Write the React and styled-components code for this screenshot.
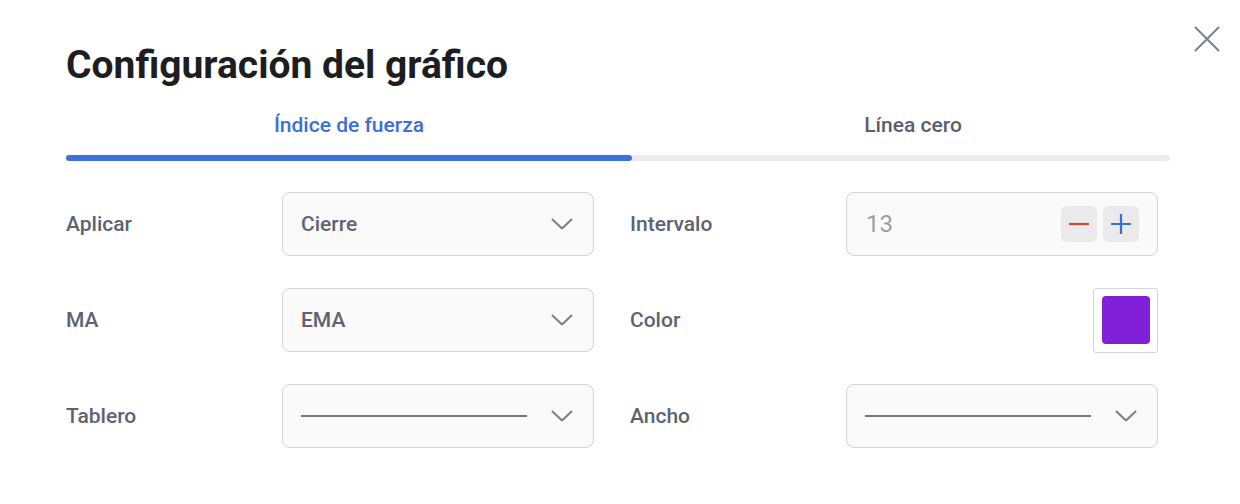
import React from "react";
import styled, { createGlobalStyle } from "styled-components";

const Global = createGlobalStyle`
  html, body { margin: 0; padding: 0; background: #ffffff; }
  body { font-family: Roboto, "Liberation Sans", Arial, sans-serif; }
  * { box-sizing: border-box; }
`;

const Dialog = styled.div`
  position: relative;
  width: 1240px;
  height: 504px;
  background: #ffffff;
  padding: 46px 70px 0 66px;
`;

const Title = styled.h1`
  margin: 0;
  font-size: 39px;
  line-height: 39px;
  font-weight: 700;
  color: #1d1e22;
`;

const CloseButton = styled.button`
  position: absolute;
  top: 24px;
  right: 18px;
  width: 30px;
  height: 30px;
  padding: 0;
  border: none;
  background: transparent;
  display: flex;
  align-items: center;
  justify-content: center;
  cursor: pointer;
`;

const Tabs = styled.div`
  margin-top: 30px;
  display: flex;
  width: 1104px;
`;

const Tab = styled.div`
  width: ${(p) => p.$w}px;
  display: flex;
  flex-direction: column;
  padding-left: ${(p) => p.$shift || 0}px;
`;

const TabLabel = styled.div`
  text-align: center;
  font-size: 21px;
  line-height: 21px;
  font-weight: 500;
  color: ${(p) => (p.$active ? "#3b6fd8" : "#5b5f6b")};
  padding-bottom: 19px;
`;

const TabBar = styled.div`
  height: 6px;
  background: ${(p) => (p.$active ? "#3d70d8" : "#ebebed")};
  border-radius: ${(p) => (p.$active ? "3px" : "0 3px 3px 0")};
  margin-left: ${(p) => (p.$shift ? -p.$shift : 0)}px;
`;

const Form = styled.div`
  margin-top: 31px;
  display: grid;
  grid-template-columns: 216px 312px 252px 312px;
  row-gap: 32px;
  width: 1092px;
`;

const Label = styled.div`
  height: 64px;
  display: flex;
  align-items: center;
  font-size: 21px;
  font-weight: 500;
  color: #5f6370;
  padding-left: ${(p) => (p.$right ? 36 : 0)}px;
`;

const Select = styled.div`
  height: 64px;
  border: 1px solid #d4d4d9;
  border-radius: 8px;
  background: #fafafa;
  display: flex;
  align-items: center;
  padding: 0 20px 0 18px;
  gap: 12px;
`;

const SelectValue = styled.div`
  flex: 1;
  font-size: 21px;
  font-weight: 500;
  color: #5f6370;
`;

const LineSample = styled.div`
  flex: 1;
  height: 2px;
  background: #777777;
  margin-right: 12px;
`;

const NumberInput = styled.div`
  height: 64px;
  border: 1px solid #d4d4d9;
  border-radius: 8px;
  background: #fafafa;
  display: flex;
  align-items: center;
  padding: 0 18px 0 19px;
`;

const NumberValue = styled.div`
  flex: 1;
  font-size: 24px;
  font-weight: 400;
  color: #9c9ea6;
`;

const StepButton = styled.button`
  width: 36px;
  height: 36px;
  border: none;
  border-radius: 6px;
  background: #eaeaec;
  padding: 0;
  margin-left: ${(p) => p.$gap || 0}px;
  display: flex;
  align-items: center;
  justify-content: center;
`;

const SwatchCell = styled.div`
  height: 64px;
  display: flex;
  align-items: center;
  justify-content: flex-end;
`;

const SwatchFrame = styled.div`
  width: 65px;
  height: 65px;
  border: 1px solid #d4d4d9;
  border-radius: 3px;
  background: #ffffff;
  display: flex;
  align-items: center;
  justify-content: center;
`;

const Swatch = styled.div`
  width: 48px;
  height: 48px;
  border-radius: 4px;
  background: ${(p) => p.$color};
`;

const Chevron = () => (
  <svg width="22" height="12" viewBox="0 0 22 12" fill="none">
    <path d="M1.5 1.5 L11 10.5 L20.5 1.5" stroke="#7b7e89" strokeWidth="2" strokeLinecap="round" strokeLinejoin="round" />
  </svg>
);

const CloseIcon = () => (
  <svg width="26" height="26" viewBox="0 0 26 26" fill="none">
    <path d="M1.5 1.5 L24.5 24.5 M24.5 1.5 L1.5 24.5" stroke="#7d808a" strokeWidth="2" strokeLinecap="round" />
  </svg>
);

export default function App() {
  return (
    <>
      <Global />
      <Dialog>
        <Title>Configuración del gráfico</Title>
        <CloseButton aria-label="Cerrar">
          <CloseIcon />
        </CloseButton>
        <Tabs>
          <Tab $w={566}>
            <TabLabel $active>Índice de fuerza</TabLabel>
            <TabBar $active />
          </Tab>
          <Tab $w={538} $shift={24}>
            <TabLabel>Línea cero</TabLabel>
            <TabBar $shift={24} />
          </Tab>
        </Tabs>
        <Form>
          <Label>Aplicar</Label>
          <Select>
            <SelectValue>Cierre</SelectValue>
            <Chevron />
          </Select>
          <Label $right>Intervalo</Label>
          <NumberInput>
            <NumberValue>13</NumberValue>
            <StepButton aria-label="Restar">
              <svg width="22" height="22" viewBox="0 0 22 22">
                <path d="M1 11 H21" stroke="#d5472a" strokeWidth="2.2" />
              </svg>
            </StepButton>
            <StepButton $gap={6} aria-label="Sumar">
              <svg width="22" height="22" viewBox="0 0 22 22">
                <path d="M1 11 H21 M11 1 V21" stroke="#3b6fd4" strokeWidth="2.2" />
              </svg>
            </StepButton>
          </NumberInput>

          <Label>MA</Label>
          <Select>
            <SelectValue>EMA</SelectValue>
            <Chevron />
          </Select>
          <Label $right>Color</Label>
          <SwatchCell>
            <SwatchFrame>
              <Swatch $color="#8220d9" />
            </SwatchFrame>
          </SwatchCell>

          <Label>Tablero</Label>
          <Select>
            <LineSample />
            <Chevron />
          </Select>
          <Label $right>Ancho</Label>
          <Select>
            <LineSample />
            <Chevron />
          </Select>
        </Form>
      </Dialog>
    </>
  );
}
